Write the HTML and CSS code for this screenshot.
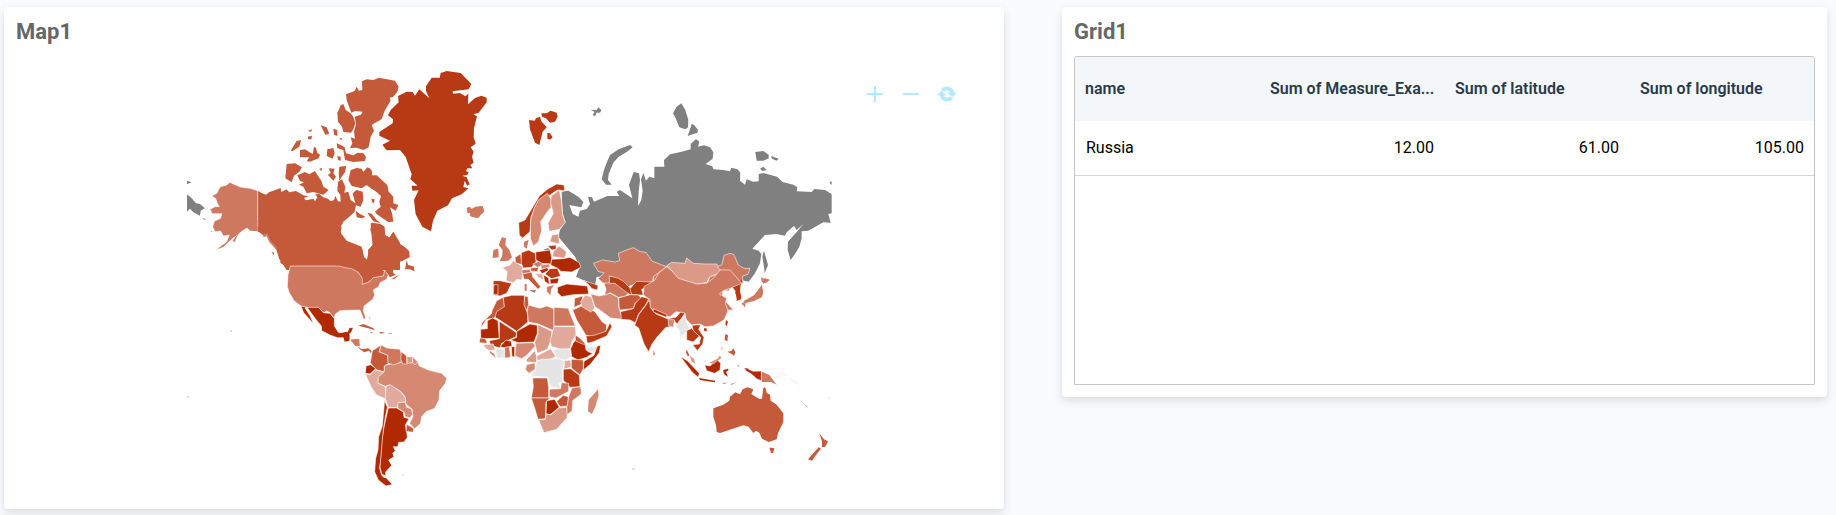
FILE: index.html
```html
<!DOCTYPE html>
<html lang="en">
<head>
<meta charset="utf-8">
<title>Dashboard</title>
<link rel="stylesheet" href="styles.css">
</head>
<body>
<main class="dashboard">
<section class="card map-card">
<h2 class="card-title">Map1</h2>
<div class="map-body">
<svg class="map" viewBox="14 56 980 443" role="img" aria-label="World map">
<!-- Northern Canada, Alaska -->
<g transform="translate(180 60) scale(.33333)">
<g class="c3 flat">
<path d="M233 392L245 399 258 404 268 396 280 392 302 384 304 396 320 388 328 397 348 393 370 406 385 409 372 414 378 421 400 416 405 424 412 412 406 403 418 402 430 412 444 416 452 424 462 420 466 408 474 424 482 425 481 405 472 392 474 365 486 358 496 380 493 398 505 395 512 420 526 430 518 400 530 390 548 395 550 420 542 440 528 436 524 455 508 470 490 485 480 505 483 520 500 542 525 552 545 560 552 592 560 600 566 590 564 570 578 555 578 530 571 510 575 488 600 492 613 500 615 525 628 533 640 515 660 548V630H320L300 600 290 570 275 530 262 520 233 515Z"/>
<path d="M546 64L560 58 580 60 597 53 645 62 656 80 652 95 640 110 629 113 632 122 615 150 605 178 583 190 575 195 582 212 572 230 566 262 550 270 530 263 510 264 517 250 512 232 525 236 522 215 528 192 524 170 543 164 548 155 525 153 514 158 500 120 498 103 524 93 530 80 537 92 547 90Z"/>
<path d="M482 136L490 132 497 150 512 160 520 170 526 190 520 208 513 218 490 216 486 200 474 185 472 160Z"/>
<path d="M422 196L440 202 448 222 436 224ZM460 206L472 210 472 228 462 224ZM384 212L396 208 393 216ZM383 230L396 227 394 238 385 238ZM478 235L486 234 484 241ZM332 272L350 243 363 240 358 260 338 273ZM360 270L375 268 388 276 398 282 402 260 408 264 412 278 420 284 416 295 390 305 380 304 388 292 360 292ZM442 268L460 264 464 280 458 296 440 288ZM470 250L482 255 494 262 498 280 520 286 533 278 550 280 558 290 555 303 520 306 495 300 490 270 472 264ZM472 288L482 290 482 302 474 300ZM320 312L345 310 366 322 358 335 342 347 335 367 316 355Z"/>
<path d="M352 346L375 336 388 343 405 333 412 345 424 362 430 380 446 390 430 404 400 396 380 400 370 380 357 374 372 367 360 363ZM418 326L426 324 424 334ZM446 325L464 326 460 340 468 350 460 362 444 345 452 338ZM478 320L498 318 496 335 485 350 478 362 476 340ZM512 330L530 324 545 326 550 335 560 325 575 330 576 346 590 346 608 362 622 375 626 395 640 410 640 430 655 435 647 452 630 442 636 460 640 485 625 486 608 475 590 462 585 455 602 440 598 425 603 408 585 392 572 385 560 375 545 385 515 378 505 360Z"/>
<path d="M560 322L570 325 576 340 560 336ZM574 416L584 418 582 430 576 426ZM527 452L540 462 556 470 546 475 530 472ZM562 458L575 461 590 480 602 490 580 484Z"/>
</g>
<path class="c4" d="M233 392L210 385 184 382 160 372 150 367 140 375 120 381 111 400 95 408 107 415 112 430 118 440 105 440 90 448 97 461 125 461 122 475 103 484 98 500 105 515 122 513 130 528 148 525 140 545 107 570 130 562 155 538 160 525 175 503 190 502 187 512 200 505 233 515Z"/>
<path class="ru flat" d="M21 403L35 415 48 430 60 432 75 445 62 452 60 467 40 457 30 446 21 455ZM21 362L35 367 21 373Z"/>
<path class="c4 flat" d="M68 474l12 4-8 1zM92 513l6 2-4 2z"/>
</g>
<!-- Greenland, Iceland -->
<g transform="translate(360 60) scale(.33333)">
<path class="c2 flat" d="M242 39L260 33 302 39 334 72 326 88 277 94 280 101 300 99 316 109 325 101 324 133 345 114 364 107 380 113 380 127 356 158 340 163 351 169 342 205 341 232 347 251 332 262 341 275 336 290 341 308 331 315 337 325 322 325 318 333 326 337 322 345 307 347 320 352 329 373 322 377 314 363 310 381 325 385 305 403 276 415 264 436 232 452 219 482 213 514 187 500 167 463 162 420 176 391 157 392 155 377 173 377 151 358 155 343 137 291 120 270 80 271 67 254 90 242 58 227 58 216 98 190 99 178 84 166 92 150 116 127 114 108 140 95 158 96 165 107 178 88 208 115 198 93 198 79 215 53 239 53Z"/>
<path class="c4 flat" d="M320 443L332 440 330 450 346 440 368 438 373 455 350 474 330 468 334 460 322 458Z"/>
</g>
<!-- North and Central America -->
<g transform="translate(230 220) scale(.33333)">
<path class="c3 flat" d="M83 20H335L330 45 342 65 375 75 396 84 402 112 411 119 416 92 428 74 425 50 422 10 450 12 463 20 465 45 478 53 490 36 505 68 525 82 538 94 539 112 515 124 485 130 470 138 458 153 470 150 488 137 490 160 498 164 480 172 470 158 460 168 430 174 415 187 397 193 388 165 365 145 330 137H182L165 125 148 118 140 90 120 62 112 42 102 47 83 34ZM525 148L530 120 534 134 552 140 553 154 540 148ZM484 176l24-12-14 12zM124 95l8 3v8zM150 122l30 16 4 14-10-10-22-12z"/>
<path class="c4" d="M181 138H328L345 143 365 146 385 157 397 175 397 193 415 187 430 173 460 168 464 152 475 165 470 178 450 188 446 200 430 210 434 225 428 238 402 258 400 273 407 292 402 300 390 270 350 271 330 272 316 282 312 295 300 278 290 273 282 279 265 262 240 265 213 258 192 242 178 218 172 200 174 165 178 150Z"/>
<path class="c4 flat" d="M82 0V33L60 32 50 20 25 42 14 66 8 63 22 44 0 60V0ZM100 42l12-2 8 20 20 20-2 8-20-22-8-18-10 4z"/>
<path class="c1" d="M213 258L232 262 265 262 280 278 300 280 313 296 313 318 325 337 340 341 352 337 358 323 370 323 364 337 359 341 359 360 350 364 341 353 322 353 300 345 275 332 274 318 256 296 243 278 231 262 225 264 240 287 250 311 236 295 221 278Z"/>
<path class="c4" d="M360 358L385 356 389 378 376 377 368 366Z"/>
<path class="c3 flat" d="M381 377l14 11 20-3 10 8-2 7-6-8-14 5-14-10zM385 317L400 312 430 325 435 331 415 325ZM448 335l18 3-14 3z"/>
<path class="c6 flat" d="M420 337h10v3h-10zM475 339h10v3h-10zM416 291l6 4-3 2zM2 331l4 2-3 3z"/>
</g>
<!-- South America -->
<g transform="translate(340 330) scale(.33333)">
<path class="c5" d="M113 139L132 125 134 106 162 100 180 98 195 88 210 98 232 92 238 108 268 121 305 130 320 145 316 160 299 182 297 210 284 235 258 245 245 260 241 281 224 296 209 280 219 260 216 238 198 222 195 200 183 185 160 172 148 165 136 169 114 160Z"/>
<path class="c3" d="M97 62L124 45 117 65 142 75 146 100 133 108 132 126 106 118 91 98Z"/>
<path class="c4" d="M124 45L140 54 180 58 185 74 184 96 160 105 144 99 143 76 118 65Z"/>
<path class="c3" d="M184 65L200 78 200 102 188 102 182 88Z"/>
<path class="c6" d="M200 80L218 80 218 98 202 100Z"/>
<path class="c5" d="M218 80L233 96 225 105 218 98Z"/>
<path class="c1" d="M78 108L92 104 107 116 90 132 76 130Z"/>
<path class="c7" d="M76 132L90 134 106 120 132 126 114 142 114 160 136 170 139 208 110 195 94 172Z"/>
<path class="c7" d="M138 169L150 164 180 183 195 202 198 216 176 218 172 233 145 232 136 205Z"/>
<path class="c5" d="M174 218L195 216 200 232 214 236 218 252 210 264 196 260 192 246 174 235Z"/>
<path class="c1" d="M145 234L170 234 190 246 192 262 207 266 196 285 200 306 202 322 192 336 176 337 173 350 160 350 166 362 158 370 162 380 146 390 155 406 137 426 137 438 125 432 120 410 126 330 132 290Z"/>
<path class="c3" d="M200 283L222 296 218 307 198 304Z"/>
<path class="c1" d="M134 210L142 232 136 260 130 300 126 340 121 400 118 412 125 436 154 464 138 468 115 450 104 425 107 385 114 360 116 320 127 288Z"/>
<path class="c1 flat" d="M0 10L20 5 28 15 28 32 14 35 10 20 0 20ZM132 444l6 0 18 19-18 0z"/>
<path class="c4 flat" d="M31 30L58 28 59 48 46 47Z"/>
<path class="light flat" d="M182 435l12-2-4 4z"/>
</g>
<!-- Russia, Svalbard, Central Asia -->
<g transform="translate(520 90) scale(.33333)">
<g class="c2 flat"><path d="M27 90L44 92 48 85 60 80 64 94 80 112 68 125 58 165 45 158 30 118ZM64 70L80 70 92 62 110 68 113 80 105 95 90 98 78 85 66 80ZM82 128L90 130 98 142 90 149 82 146Z"/></g>
<g class="ru flat"><path d="M125 305L145 302 175 320 190 336 184 352 148 345 158 372 175 380 180 362 200 357 210 343 204 320 216 322 222 335 262 318 298 318 290 305 300 300 337 325 327 285 341 246 357 250 360 270 356 305 354 348 364 330 368 302 363 268 370 249 378 272 388 260 403 265 403 230 433 230 432 210 450 193 485 185 512 178 512 162 528 147 538 155 534 170 552 166 570 172 580 187 578 206 557 222 577 229 580 238 610 240 630 244 634 233 653 238 661 248 660 272 675 284 680 268 700 275 716 274 716 252 730 249 771 260 788 276 820 284 832 292 830 304 875 306 883 297 915 300 935 312 935 370 925 372 932 398 910 397 865 422 845 424 845 445 838 470 825 492 812 510 803 480 804 455 832 424 850 402 830 420 822 408 800 427 795 437 770 432 735 435 697 476 716 482 724 492 720 520 705 550 686 575 672 572 640 560H230L225 587 200 575 168 560 180 530 165 500 140 470 115 440 120 420 136 395 128 370Z"/>
<path d="M330 165L338 172 320 186 296 200 280 218 266 252 264 270 275 284 258 284 245 268 252 240 260 218 270 195 296 178ZM484 40L496 60 505 90 504 112 496 118 478 112 467 85 459 70 470 50ZM515 102L522 104 534 120 532 128 503 138 510 118ZM212 60L230 60 235 52 244 60 240 68 230 68 225 79 218 75 224 66ZM706 186L730 183 746 194 746 205 730 212 710 212ZM753 198L776 206 770 212 756 206ZM720 236L730 230 740 240 728 243ZM928 278l7-5v12zM732 482L744 525 734 550 732 530 727 500ZM70 480l14-6 8 8z"/></g>
<path class="c4" d="M220 520L248 510 285 516 299 512 295 490 320 480 340 473 360 485 378 487 397 514 440 530 420 550 400 560 398 577 350 580 325 590 300 572 270 558 268 585 248 578 235 566 252 548 235 545Z"/>
<path class="c6" d="M440 527L455 517 495 520 500 504 520 520 555 522 590 522 602 538 608 546 570 560 560 578 530 583 485 575 460 560 455 540Z"/>
<path class="c4" d="M440 530L455 542 460 560 485 575 530 583 562 578 570 560 608 548 592 530 606 524 612 496 630 490 642 494 655 525 672 535 690 535 684 553 668 558 668 575 640 587 625 603 610 600 605 620 640 660H375L380 600 400 580 400 560Z"/>
<path class="c4 flat" d="M734 564l14 6-10 9-10-3zM724 588l5 15-3 18-24 12-28 6-5 9-4-8 28-13 20-10z"/>
<path class="c2 flat" d="M645 605l14 2 5 20-12 3zM636 590l28-20 4 6-20 28z"/>
</g>
<!-- Europe -->
<g transform="translate(470 170) scale(.33333)">
<path class="c2" d="M146 158L165 150 180 125 208 78 232 58 260 42 282 45 284 62 262 60 240 75 210 88 195 112 183 140 180 185 158 204 148 196Z"/>
<path class="c5" d="M232 70L244 90 243 112 232 125 212 155 215 182 205 215 190 228 181 205 182 150 192 115 205 90Z"/>
<path class="c6" d="M244 78L268 60 274 90 278 135 286 158 268 178 238 184 234 160 250 130 242 100Z"/>
<path class="c4 flat" d="M96 202L108 205 106 225 118 240 126 262 115 272 88 274 96 260 98 240 86 225ZM70 240L85 236 86 262 68 264ZM162 215l14-5-6 26-8-6z"/>
<path class="c4 flat" d="M0 115L15 118 35 108 43 122 25 144 0 138Z"/>
<path class="c7" d="M97 293L120 285 130 272 158 290 156 330 140 328 130 338 108 332 112 305Z"/>
<path class="c2" d="M70 332L90 332 125 340 110 370 90 378 70 374Z"/><path class="c1" d="M72 344H84V373H70Z"/>
<path class="c3" d="M135 262L152 252 156 284 137 278Z"/>
<path class="c2" d="M154 248L175 240 196 250 198 276 185 292 160 294 154 280Z"/>
<path class="c1" d="M197 246L240 240 245 262 243 282 215 280 198 270Z"/>
<path class="c2" d="M233 228L258 225 258 238 245 240Z"/>
<path class="c6" d="M246 195L266 192 268 222 240 215Z"/>
<path class="c6" d="M250 245L268 228 290 246 284 264 248 260Z"/>
<path class="c1" d="M245 268L280 266 300 262 328 278 332 292 305 306 272 304 265 296 242 285Z"/>
<path class="c4" d="M188 282l18-8 16 10-20 8zM155 300l24-2 4 10-26 4z"/><path class="c3" d="M182 294l24-2-4 13-20-2z"/><path class="c1" d="M208 300l24-8 4 9-20 10z"/>
<path class="c5" d="M212 285l25-3 4 8-26 8z"/>
<path class="c2" d="M225 312L240 296 262 295 272 318 245 326Z"/><path class="c1" d="M240 328l27-4-4 16-22 2z"/><path class="c1" d="M220 314l16 10 2 20-14-10z"/>
<path class="c3" d="M158 312L185 306 188 320 212 350 204 358 175 328 162 328Z"/><path class="c7" d="M196 310l22 2 2 18-16-8z"/>
<path class="c4" d="M230 350l24-6-10 14-2 20-12-14z"/>
<path class="c1" d="M262 352L290 342 352 348 356 372 310 374 275 380 263 368Z"/>
<path class="c2" d="M342 332l24 8 18 6-2 14-16-4-10-12z"/>
<path class="c4 flat" d="M178 360h20l-4 9zM164 342h6v20h-6z"/>
</g>
<!-- Africa and the Middle East -->
<g transform="translate(470 280) scale(.33333)">
<path class="c3" d="M100 52L80 62 66 92 65 100 36 128 32 144 50 118 70 115 105 90Z"/>
<path class="c2" d="M100 52L125 46 163 46 164 75 172 100 174 126 140 154 86 118 75 112 80 95 103 80Z"/>
<path class="c3" d="M164 48l10 2 2 24-6 18-8-18z"/>
<path class="c4" d="M175 75L210 85 230 78 252 86V152L205 132 175 126 172 95Z"/>
<path class="c4" d="M252 82L295 85 300 100 316 138H252Z"/>
<path class="c1" d="M32 148L52 146 52 122 68 114 84 122 88 175 32 176Z"/>
<path class="c2" d="M88 124L140 158 138 170 95 190 90 204 62 196 58 182 88 176Z"/>
<path class="c1" d="M140 154L180 132 202 136 202 160 192 186 145 188 122 180 140 172Z"/>
<path class="c6" d="M204 134L246 154 244 178 232 208 202 220 194 188 204 162Z"/>
<path class="c7" d="M252 140H316L318 165 306 184 300 208 275 208 245 200 240 184 248 154Z"/>
<path class="c3" d="M30 174l16 2 6 14-24-2z"/><path class="c7" d="M40 194l30-2 6 18-18 2-12-8z"/><path class="c5" d="M60 212l14 10 4 14-20-18z"/>
<path class="light" d="M76 206H102V234H80Z"/><path class="c1" d="M90 200l18-20 16 4 2 14-20 6z"/><path class="c4" d="M104 202l14-2 4 32-18 2z"/><path class="c1" d="M124 200h10v30h-8z"/>
<path class="c5" d="M138 190L190 188 196 198 172 224 155 236 135 228Z"/>
<path class="c6" d="M168 240L195 212 200 230 200 248 172 246Z"/>
<path class="c7" d="M200 228L242 206 258 230 240 238 202 242Z"/>
<path class="light" d="M248 208L300 206 305 232 285 240 262 236Z"/>
<path class="c1" d="M310 188L320 178 345 192 348 210 368 220 350 232 324 240 305 230 302 206Z"/>
<path class="c3" d="M316 165l12 8 18 18-6 2-24-10z"/>
<path class="light" d="M348 202L382 200 380 218 355 216Z"/>
<path class="c1" d="M382 198L392 196 388 218 362 252 340 270 342 244 372 226Z"/>
<path class="c5" d="M170 254l24-6 2 20-20 12-10-12z"/>
<path class="light" d="M200 244L215 238 270 236 284 245 276 278 278 306 268 310 272 328 240 318 234 292 182 288 195 270Z"/>
<path class="c7" d="M284 242l18-2 2 20-22 8z"/>
<path class="c3" d="M304 238L340 240V266L330 285 304 264Z"/>
<path class="c2" d="M280 268L302 266 328 286 330 320 300 322 280 300Z"/>
<path class="c3" d="M188 294L232 294 236 322 236 354H184L190 320Z"/>
<path class="c4" d="M238 328L272 326 274 308 296 310 296 334 258 354 238 350Z"/>
<path class="c4" d="M306 324L332 320 334 342 308 362 306 392 290 405 290 378 296 350Z"/>
<path class="c3" d="M184 354H240L228 366 226 416 204 418 194 384Z"/>
<path class="c1" d="M230 362L254 358 268 382 240 404 228 402Z"/>
<path class="c3" d="M260 364L280 346 295 350 292 378 270 380Z"/>
<path class="c6" d="M206 420L226 418 228 402 244 404 266 384 290 382 292 412 260 448 222 458Z"/>
<path class="c5 flat" d="M384 328L386 345 376 380 366 402 354 394 356 360Z"/>
<path class="c3" d="M308 90L335 78 375 95 396 125 410 135 408 155 372 170 348 166 320 120Z"/>
<path class="c2" d="M348 168L372 166 408 154 420 128 426 140 410 168 370 185 352 190Z"/>
<path class="c3" d="M314 55l24-7-2 24-24 10z"/><path class="c7" d="M332 65L345 46 365 50 374 85 362 96 336 80Z"/>
</g>
<!-- South and East Asia -->
<g transform="translate(570 240) scale(.33333)">
<path class="c5" d="M62 162L88 168 120 160 145 172 146 200 158 238 122 234 90 210 75 200Z"/>
<path class="c4" d="M102 130L118 128 148 130 176 160 164 170 145 172 120 158 104 166 108 148Z"/>
<path class="c2" d="M118 108L145 115 160 124 178 142 190 155 182 165 160 150 135 130 118 130Z"/>
<path class="c2" d="M180 146L200 124 250 126 230 142 215 148 220 165 185 164Z"/>
<path class="c3" d="M146 174L180 164 205 165 215 175 195 190 190 206 148 210Z"/>
<path class="c2" d="M152 215L190 206 196 190 215 170 236 176 226 196 206 222 196 248 180 240 154 238Z"/>
<path class="c4" d="M222 140L255 120 265 100 290 80 305 92 325 115 380 132 410 130 430 115 450 90 480 90 515 130 480 145 460 152 448 162 470 175 466 190 474 212 462 240 430 258 405 260 390 252 365 255 345 235 345 220 318 215 300 230 262 225 240 200 240 178 220 165Z"/>
<path class="c2" d="M238 180L242 204 258 222 292 236 318 232 332 216 345 220 322 254 312 240 298 244 304 260 288 262 262 290 246 312 236 336 222 312 206 264 194 256 206 224 226 198Z"/>
<path class="c1" d="M250 206l40 18v8l-40-16z"/><path class="c5" d="M294 236l20 4-4 22-14-4z"/>
<path class="light" d="M345 222L350 245 358 270 345 280 330 294 328 270 316 258Z"/>
<path class="c2" d="M350 272L365 265 388 288 370 306 350 300Z"/><path class="c2" d="M366 256l26-2-6 14 16 24-4 20-16 20-14-18 20-2 4-20-22-20z"/>
<path class="c5 flat" d="M250 330l6 12-6 6z"/>
<path class="c2 flat" d="M492 144l20-8-2 18 4 18-2 6-12 5v-22zM468 240l6 5-4 14-4-6zM402 265h8v9l-8-2z"/>
<path class="c4 flat" d="M573 112l10 5 17 2-20 12-5-7zM576 134l3 28-5 10-22 8-24 8-8-4 32-18zM520 192l8-3-4 14z"/>
</g>
<!-- South-East Asia and Oceania -->
<g transform="translate(660 300) scale(.33333)">
<path class="c3 flat" d="M160 325L190 314 208 302 210 290 226 277 240 283 248 268 262 262 280 268 274 282 298 297 306 296 310 264 316 262 320 278 330 284 332 302 350 314 370 340 370 366 354 400 350 418 326 426 306 416 298 398 288 392 280 399 266 380 250 376 218 386 180 399 170 396 168 376 160 350ZM328 443L343 444 340 458 333 459ZM478 400L492 418 504 424 496 440 486 442 486 424ZM476 442L483 446 470 462 456 482 444 478Z"/>
<g class="c1"><path d="M62 170L82 182 105 206 118 220 115 232 98 218 78 192Z"/><path d="M134 195L150 198 172 180 182 190 180 210 164 220 140 212Z"/><path d="M262 206L280 214 304 213V242L290 236 274 222 254 210Z"/></g>
<path class="c1 flat" d="M117 234L165 242 165 247 120 240ZM190 210l14-4 2 4-8 6 6 14-10-6-4-8zM252 204l14 2-2 8z"/>
<path class="c4 flat" d="M306 215L328 225 350 254 334 246 306 246ZM430 310l14 12-4-1z"/>
<path class="c3 flat" d="M80 148l8 18-4 4-6-12zM196 102l8 4-2 18-8-4zM202 155l12-2 6-8 6 12-4 10-8-6z"/>
<path class="c6 flat" d="M90 168l12 8 4 16-12-8zM148 188l24-12 8-10 4 8-22 18zM180 150l10-10-3 8z"/>
<path class="c4 flat" d="M232 194l6 4-4 2zM212 252l16-5-14 8zM185 248h16l-8 4z"/>
<path class="faint" d="M344 233l14-2 8-8M360 214l20 14M390 236l28 18M502 298l10-6M181 142l10-9"/>
</g>
<path class="faint" d="M230 331h2M632 469h3M187 397h2"/>
</svg>
<div class="controls">
<svg viewBox="0 0 20 18"><path class="line" d="M10 1v16M2 9h16"/></svg>
<svg viewBox="0 0 20 18"><path class="line" d="M2 9h16"/></svg>
<svg viewBox="0 0 20 18"><path class="fill" d="M4 4.3A7.6 7.6 0 0 1 17.2 7.6H20L15.4 12.4 10.6 7.6H13.4A3.8 3.8 0 0 0 7 6.8ZM16 13.7A7.6 7.6 0 0 1 2.8 10.4H0L4.6 5.6 9.4 10.4H6.6A3.8 3.8 0 0 0 13 11.2Z"/></svg>
</div>
</div>
</section>
<section class="card grid-card">
<h2 class="card-title">Grid1</h2>
<div class="grid">
<div class="grid-row grid-head"><span>name</span><span>Sum of Measure_Exa...</span><span>Sum of latitude</span><span>Sum of longitude</span></div>
<div class="grid-row grid-data"><span>Russia</span><span class="num">12.00</span><span class="num">61.00</span><span class="num">105.00</span></div>
</div>
</section>
</main>
</body>
</html>
```
FILE: styles.css
```css
* { box-sizing: border-box; }
body { margin: 0; background: #fafbfd; font-family: Roboto, sans-serif; overflow: hidden; }
.dashboard { display: flex; align-items: flex-start; gap: 58px; height: 515px; padding: 7px 0 0 4px; }
.card { background: #fff; border-radius: 4px; box-shadow: 0 4px 10px rgba(40, 45, 70, .15); }
.map-card { width: 1000px; height: 502px; padding: 0 10px; }
.grid-card { width: 765px; height: 390px; padding: 0 12px; }
.card-title { margin: 0; height: 49px; padding-top: 12px; padding-left: 2px; font-size: 22px; line-height: 26px; font-weight: 700; color: #666; }
.grid-card .card-title { padding-left: 0; }
.map-body { position: relative; height: 443px; }
.map { display: block; width: 980px; height: 443px; stroke: #fff; stroke-width: 1.7; stroke-linejoin: round; }
.flat { stroke: none; }
.c1 { fill: #b12900; }
.c2 { fill: #b83a14; }
.c3 { fill: #c55a3a; }
.c4 { fill: #cf7860; }
.c5 { fill: #d58973; }
.c6 { fill: #db9a88; }
.c7 { fill: #e1aa9c; }
.ru { fill: #808080; }
.light { fill: #e5e5e5; }
.faint { fill: none; stroke: #ecd2cb; stroke-width: 1.5; }
.controls { position: absolute; top: 29px; right: 37px; display: flex; gap: 16px; }
.controls svg { width: 20px; height: 18px; }
.line { fill: none; stroke: #b3e9fd; stroke-width: 2; }
.fill { fill: #b3e9fd; }
.grid { height: 329px; border: 1px solid #c6c6c6; border-radius: 3px 3px 0 0; overflow: hidden; }
.grid-row { display: grid; grid-template-columns: repeat(4, 185px); align-items: center; font-size: 16px; }
.grid-row span { padding: 0 10px; white-space: nowrap; }
.grid-head { height: 64px; padding-bottom: 2px; background: #f3f7fa; color: #2b3a48; font-weight: 600; }
.grid-data { height: 55px; padding-bottom: 2px; border-bottom: 1px solid #d5d5d5; color: #000; }
.grid-data span { padding: 0 11px; }
.grid-row .num { text-align: right; }
```
